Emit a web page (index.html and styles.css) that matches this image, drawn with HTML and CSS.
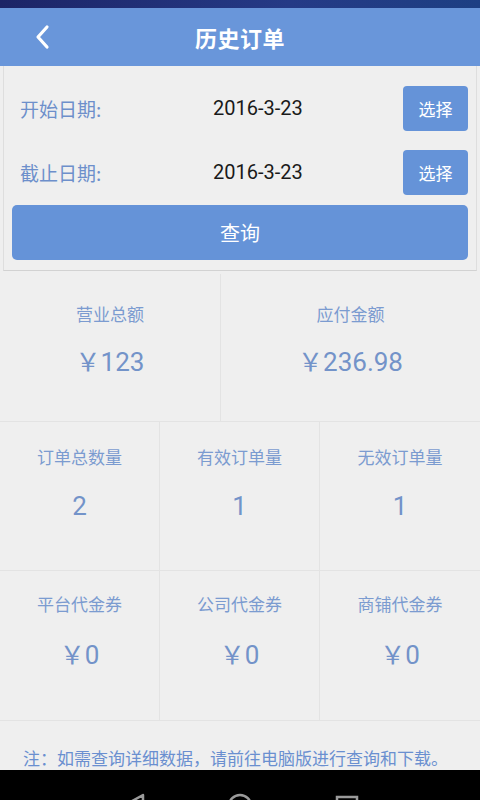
FILE: index.html
```html
<!DOCTYPE html>
<html lang="zh-CN">
<head>
    <meta charset="utf-8">
    <meta name="viewport" content="width=device-width, initial-scale=1">
    <title>历史订单</title>
    <link rel="stylesheet" href="styles.css">
</head>
<body>

    <div class="status-bar"></div>

    <header class="title-bar">
        <a class="back" href="#">
            <svg width="16" height="26" viewBox="0 0 16 26">
                <path d="M13 3 L4 13 L13 23" fill="none" stroke="#fff" stroke-width="3.2" stroke-linecap="round" stroke-linejoin="round"/>
            </svg>
        </a>
        <h1>历史订单</h1>
    </header>

    <div class="query-panel">
        <div class="date-row">
            <span class="date-label">开始日期:</span>
            <span class="date-value">2016-3-23</span>
            <button class="pick-btn">选择</button>
        </div>
        <div class="date-row">
            <span class="date-label">截止日期:</span>
            <span class="date-value">2016-3-23</span>
            <button class="pick-btn">选择</button>
        </div>
        <button class="query-btn">查询</button>
    </div>

    <div class="stats two">
        <div class="cell">
            <p class="cell-label">营业总额</p>
            <p class="cell-value"><span class="yen">￥</span>123</p>
        </div>
        <div class="cell">
            <p class="cell-label">应付金额</p>
            <p class="cell-value"><span class="yen">￥</span>236.98</p>
        </div>
    </div>

    <div class="stats three">
        <div class="cell">
            <p class="cell-label">订单总数量</p>
            <p class="cell-value">2</p>
        </div>
        <div class="cell">
            <p class="cell-label">有效订单量</p>
            <p class="cell-value">1</p>
        </div>
        <div class="cell">
            <p class="cell-label">无效订单量</p>
            <p class="cell-value">1</p>
        </div>
    </div>

    <div class="stats three last">
        <div class="cell">
            <p class="cell-label">平台代金券</p>
            <p class="cell-value"><span class="yen">￥</span>0</p>
        </div>
        <div class="cell">
            <p class="cell-label">公司代金券</p>
            <p class="cell-value"><span class="yen">￥</span>0</p>
        </div>
        <div class="cell">
            <p class="cell-label">商铺代金券</p>
            <p class="cell-value"><span class="yen">￥</span>0</p>
        </div>
    </div>

    <p class="note">注：如需查询详细数据，请前往电脑版进行查询和下载。</p>

    <div class="nav-bar">
        <svg width="480" height="30" viewBox="0 0 480 30">
            <path d="M143 25 L125 35 L143 45 Z" fill="none" stroke="#9a9a9a" stroke-width="2.5" stroke-linejoin="round"/>
            <circle cx="240" cy="36" r="11" fill="none" stroke="#9a9a9a" stroke-width="2.5"/>
            <rect x="337" y="27" width="20" height="20" fill="none" stroke="#9a9a9a" stroke-width="2.5"/>
        </svg>
    </div>

</body>
</html>
```

FILE: styles.css
```css
* {
    margin: 0;
    padding: 0;
    box-sizing: border-box;
}

body {
    width: 480px;
    height: 800px;
    overflow: hidden;
    background-color: #efefef;
    font-family: Roboto, "Noto Sans CJK SC", sans-serif;
    display: flex;
    flex-direction: column;
}

.status-bar {
    height: 8px;
    background: linear-gradient(90deg, #1c2466, #253a86 60%, #1d3f83);
}

.title-bar {
    height: 58px;
    background-color: #6996da;
    display: flex;
    align-items: center;
    justify-content: center;
    position: relative;
}

.back {
    position: absolute;
    left: 34px;
    top: 16px;
    display: block;
}

.title-bar h1 {
    color: #fff;
    font-size: 22px;
    font-weight: 700;
    font-family: "Noto Sans CJK SC", sans-serif;
    letter-spacing: 0.5px;
}

.query-panel {
    margin: 0 3px;
    padding: 20px 8px 10px;
    border: 1px solid #dedede;
    border-top: none;
    border-bottom-color: #d2d2d2;
    background-color: #efefef;
    display: flex;
    flex-direction: column;
    gap: 19px;
}

.date-row {
    display: flex;
    align-items: center;
    height: 45px;
}

.date-label {
    width: 201px;
    padding-left: 8px;
    font-size: 19px;
    color: #6d8fcb;
    font-family: "Noto Sans CJK SC", sans-serif;
}

.date-value {
    flex: 1;
    font-size: 20px;
    color: #1a1a1a;
}

.pick-btn {
    width: 65px;
    height: 45px;
    border: none;
    border-radius: 4px;
    background-color: #6593d8;
    color: #fff;
    font-size: 17px;
    font-family: "Noto Sans CJK SC", sans-serif;
}

.query-btn {
    height: 55px;
    margin-top: -9px;
    border: none;
    border-radius: 5px;
    background-color: #6593d8;
    color: #fff;
    font-size: 20px;
    font-family: "Noto Sans CJK SC", sans-serif;
}

.stats {
    display: grid;
    border-bottom: 1px solid #e3e3e3;
}

.stats.two {
    grid-template-columns: 221px 1fr;
    height: 151px;
    padding-top: 3px;
}

.stats.three {
    grid-template-columns: 160px 160px 160px;
    height: 150px;
}

.cell {
    text-align: center;
    border-right: 1px solid #e3e3e3;
}

.cell:last-child {
    border-right: none;
}

.stats.two .cell {
    padding-top: 27px;
}

.stats.three .cell {
    padding-top: 22px;
}

.stats.last .cell {
    padding-top: 20px;
}

.cell-label {
    font-size: 17px;
    color: #7b9bd0;
    font-family: "Noto Sans CJK SC", sans-serif;
    line-height: 26px;
}

.cell-value {
    margin-top: 16px;
    font-size: 26px;
    color: #7393c9;
    line-height: 34px;
}

.stats.three .cell-value {
    margin-top: 19px;
}

.yen {
    font-family: "Noto Sans CJK SC", sans-serif;
    font-size: 25px;
}

.note {
    flex: 1;
    padding: 24px 0 0 23px;
    font-size: 17px;
    color: #6a8fd0;
    font-family: "Noto Sans CJK SC", sans-serif;
    white-space: nowrap;
}

.nav-bar {
    height: 30px;
    background-color: #000;
    overflow: hidden;
}

.nav-bar svg {
    display: block;
}
```
